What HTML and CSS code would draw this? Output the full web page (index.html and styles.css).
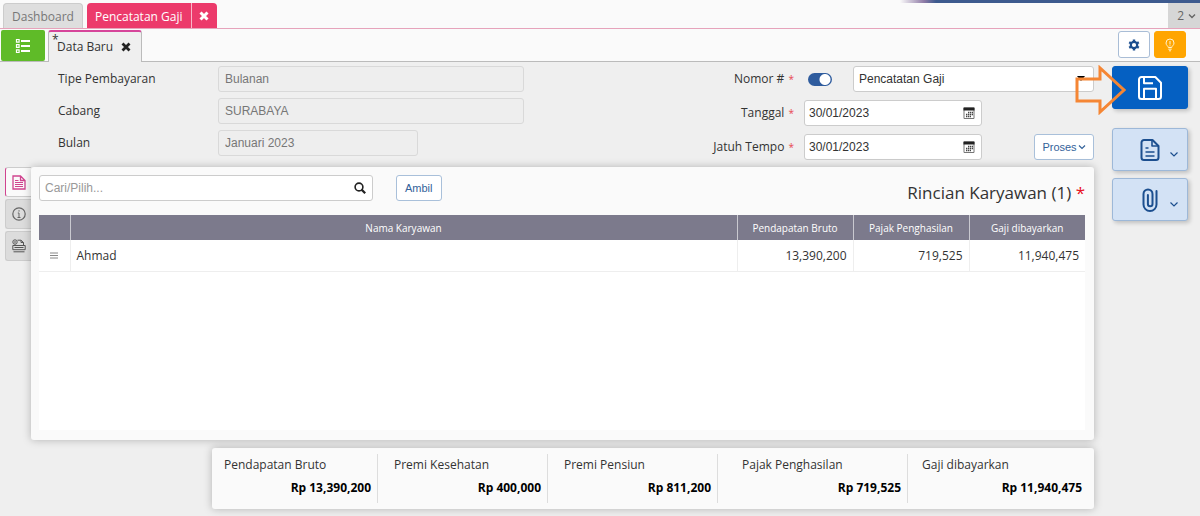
FILE: index.html
```html
<!DOCTYPE html>
<html lang="id">
<head>
  <meta charset="UTF-8">
  <meta name="viewport" content="width=device-width, initial-scale=1">
  <title>Pencatatan Gaji</title>
  <link rel="stylesheet" href="styles.css">
</head>
<body>
  <div class="strip"></div>

  <nav class="tabs">
    <a class="tab" href="#">Dashboard</a>
    <div class="tab-active">
      <a class="tab-name" href="#">Pencatatan Gaji</a>
      <button class="tab-close" type="button" aria-label="Tutup Pencatatan Gaji">
        <svg width="10" height="10" viewBox="0 0 10 10"><path d="M1.5 1.5l7 7M8.5 1.5l-7 7" stroke="currentColor" stroke-width="3"/></svg>
      </button>
    </div>
    <button class="tab-count" type="button">2
      <svg width="8" height="8" viewBox="0 0 8 8"><path d="M1 2.5l3 3 3-3" fill="none" stroke="currentColor" stroke-width="1.4"/></svg>
    </button>
  </nav>

  <div class="subtabs">
    <button class="list-btn" type="button" aria-label="Daftar">
      <svg width="16" height="16" viewBox="0 0 16 16" fill="none" stroke="#fff">
        <path d="M6 3h9M6 8h9M6 13h9" stroke-width="2"/>
        <path d="M1.5 1.5h2.6v2.6H1.5zM1.5 6.7h2.6v2.6H1.5zM1.5 11.9h2.6v2.6H1.5z" stroke-width="1.2"/>
      </svg>
    </button>
    <div class="subtab">
      <span class="dirty">*</span><span>Data Baru</span>
      <button class="sub-close" type="button" aria-label="Tutup Data Baru">
        <svg width="10" height="10" viewBox="0 0 10 10"><path d="M1.5 1.5l7 7M8.5 1.5l-7 7" stroke="currentColor" stroke-width="2.8"/></svg>
      </button>
    </div>
    <div class="tools">
      <button class="tool" type="button" aria-label="Pengaturan">
        <svg width="12" height="12" viewBox="0 0 12 12" fill="none" stroke="#1c4f8f">
          <circle cx="6" cy="6" r="3.2" stroke-width="2.2"/>
          <path d="M6 .4v2M6 9.6v2M1.2 3.2l1.7 1M9.1 7.8l1.7 1M1.2 8.8l1.7-1M9.1 4.2l1.7-1" stroke-width="2.4"/>
        </svg>
      </button>
      <button class="tool tip" type="button" aria-label="Bantuan">
        <svg width="12" height="14" viewBox="0 0 12 14" fill="none" stroke="#fff3d0">
          <path d="M4.3 9.5C4.3 8 2 7.4 2 5a4 4 0 0 1 8 0c0 2.4-2.3 3-2.3 4.5zM4.3 11.2h3.4M5 12.8h2M6 3v3.5M6 7.3v1"/>
        </svg>
      </button>
    </div>
  </div>

  <main class="page">
    <div class="content">
      <form class="form">
        <div class="left-fields">
          <label for="tipe">Tipe Pembayaran</label>
          <input id="tipe" type="text" value="Bulanan" disabled>
          <label for="cabang">Cabang</label>
          <input id="cabang" type="text" value="SURABAYA" disabled>
          <label for="bulan">Bulan</label>
          <input id="bulan" class="short" type="text" value="Januari 2023" disabled>
        </div>
        <div class="right-fields">
          <div class="field">
            <label for="nomor">Nomor # <i>*</i></label>
            <input class="switch" type="checkbox" aria-label="Nomor otomatis" checked>
            <div class="select-box">
              <select id="nomor"><option>Pencatatan Gaji</option></select>
              <svg class="caret" width="8" height="6" viewBox="0 0 8 6"><path d="M0 0h8L4 5z"/></svg>
            </div>
          </div>
          <div class="field">
            <label for="tanggal">Tanggal <i>*</i></label>
            <div class="date">
              <input id="tanggal" type="text" value="30/01/2023">
              <button type="button" aria-label="Pilih tanggal">
                <svg width="12" height="12" viewBox="0 0 12 12"><path d="M1 1h10v10.500H1z" fill="#fff" stroke="#777"/><path d="M.5 .5h11v3H.5z" fill="#222"/><path d="M5 5.500h5M3 7.500h7M3 9.500h5" stroke="#444" stroke-width="1.3" stroke-dasharray="1.4 .6"/></svg>
              </button>
            </div>
          </div>
          <div class="field">
            <label for="tempo">Jatuh Tempo <i>*</i></label>
            <div class="date">
              <input id="tempo" type="text" value="30/01/2023">
              <button type="button" aria-label="Pilih jatuh tempo">
                <svg width="12" height="12" viewBox="0 0 12 12"><path d="M1 1h10v10.500H1z" fill="#fff" stroke="#777"/><path d="M.5 .5h11v3H.5z" fill="#222"/><path d="M5 5.500h5M3 7.500h7M3 9.500h5" stroke="#444" stroke-width="1.3" stroke-dasharray="1.4 .6"/></svg>
              </button>
            </div>
            <button class="btn proses" type="button">Proses<svg width="8" height="8" viewBox="0 0 8 8"><path d="M1 2.500l3 3 3-3" fill="none" stroke="currentColor" stroke-width="1.2"/></svg></button>
          </div>
        </div>
      </form>

      <div class="detail">
        <div class="side-tabs">
          <button class="side-tab active" type="button" aria-label="Rincian">
            <svg width="14" height="15" viewBox="0 0 14 15" fill="none" stroke="#d0448f"><path d="M1 1h7.500L13 5.500V14H1zM8.500 1v4.500H13" stroke-width="1.3"/><path d="M3 5.500h3.500M3 7.500h8M3 9.500h8M3 11.500h8"/></svg>
          </button>
          <button class="side-tab" type="button" aria-label="Info">
            <svg width="14" height="14" viewBox="0 0 14 14" fill="none" stroke="#666"><circle cx="7" cy="7" r="6.2" stroke-width="1.2"/><path d="M7 3.2v1.400M5.800 6H7v4.500M5.500 10.500h3"/></svg>
          </button>
          <button class="side-tab" type="button" aria-label="Lampiran">
            <svg width="14" height="14" viewBox="0 0 14 14" fill="none" stroke="#555"><circle cx="3" cy="3" r="2.2"/><path d="M3 2v2M5.500 1.200H9l2.500 2.300v3M9 1.200v2.300h2.500M3 6.500V5.500"/><path d="M.8 6.500h12.400v4.200H.8zM2.500 8.500h9M1.500 12.800h11"/></svg>
          </button>
        </div>
        <section class="card">
          <div class="card-head">
            <div class="search">
              <input type="text" placeholder="Cari/Pilih..." aria-label="Cari/Pilih">
              <button type="button" aria-label="Cari">
                <svg width="12" height="12" viewBox="0 0 12 12" fill="none" stroke="#222"><circle cx="5" cy="5" r="3.9" stroke-width="1.6"/><path d="M7.600 7.600l3.600 3.600" stroke-width="2.2"/></svg>
              </button>
            </div>
            <button class="btn" type="button">Ambil</button>
            <h2>Rincian Karyawan (1) <i>*</i></h2>
          </div>
          <div class="table-box">
            <table>
              <colgroup><col class="c-handle"><col><col class="c-num"><col class="c-num"><col class="c-num"></colgroup>
              <thead>
                <tr><th></th><th>Nama Karyawan</th><th>Pendapatan Bruto</th><th>Pajak Penghasilan</th><th>Gaji dibayarkan</th></tr>
              </thead>
              <tbody>
                <tr>
                  <td class="handle"><svg width="8" height="7" viewBox="0 0 8 7"><path d="M0 1h8M0 3.500h8M0 6h8" stroke="#888"/></svg></td>
                  <td>Ahmad</td><td class="num">13,390,200</td><td class="num">719,525</td><td class="num">11,940,475</td>
                </tr>
              </tbody>
            </table>
          </div>
        </section>
      </div>

      <dl class="summary">
        <div><dt>Pendapatan Bruto</dt><dd>Rp 13,390,200</dd></div>
        <div><dt>Premi Kesehatan</dt><dd>Rp 400,000</dd></div>
        <div><dt>Premi Pensiun</dt><dd>Rp 811,200</dd></div>
        <div class="wide"><dt>Pajak Penghasilan</dt><dd>Rp 719,525</dd></div>
        <div class="wide last"><dt>Gaji dibayarkan</dt><dd>Rp 11,940,475</dd></div>
      </dl>
    </div>

    <aside class="actions">
      <div class="save-box">
        <button class="action save" type="button" aria-label="Simpan">
          <svg width="24" height="24" viewBox="0 0 24 24" fill="none" stroke="#fff" stroke-width="2" stroke-linejoin="round"><path d="M3.500 1h13.800L23 6.700v13.800a2.500 2.500 0 0 1-2.500 2.500h-17A2.500 2.500 0 0 1 1 20.500v-17A2.500 2.500 0 0 1 3.500 1z"/><path d="M6 1.500v5.700h9M6 22.500v-9.700h12v9.700"/></svg>
        </button>
        <svg class="pointer" width="52" height="50" viewBox="0 0 52 50"><path d="M3 14h23V3l24 22-24 22V36H3z" fill="none" stroke="#f58634" stroke-width="3"/></svg>
      </div>
      <button class="action" type="button" aria-label="Dokumen">
        <svg width="20" height="24" viewBox="0 0 20 24" fill="none" stroke="#1c4f8f" stroke-width="2" stroke-linejoin="round"><path d="M4 2h8.500L18.500 8v11.500A2.500 2.500 0 0 1 16 22H4a2.500 2.500 0 0 1-2.500-2.500v-15A2.500 2.500 0 0 1 4 2z"/><path d="M12 2.500V8h6M5.500 10h3M5.500 14h9M5.500 18h9" stroke-width="1.6"/></svg>
        <svg class="more" width="8" height="8" viewBox="0 0 8 8"><path d="M.5 2.500L4 6l3.500-3.500" fill="none" stroke="#1c4f8f" stroke-width="1.2"/></svg>
      </button>
      <button class="action" type="button" aria-label="Lampiran">
        <svg width="16" height="24" viewBox="0 0 16 24" fill="none" stroke="#1c4f8f" stroke-width="2" stroke-linecap="round"><path d="M14.500 3v13.500a6.500 6.500 0 0 1-13 0V6a4.500 4.500 0 0 1 9 0v10a2.300 2.300 0 0 1-4.600 0V7"/></svg>
        <svg class="more" width="8" height="8" viewBox="0 0 8 8"><path d="M.5 2.500L4 6l3.500-3.500" fill="none" stroke="#1c4f8f" stroke-width="1.2"/></svg>
      </button>
    </aside>
  </main>
</body>
</html>
```

FILE: styles.css
```css
* { box-sizing: border-box; }
body {
  margin: 0;
  min-height: 100vh;
  background: #efefef;
  color: #333;
  font: 12px/16px "Open Sans", "Noto Sans", sans-serif;
}
a { color: inherit; text-decoration: none; }
i { color: #e8474f; font-style: normal; }
button, input, select { font-family: "Liberation Sans", Arial, sans-serif; }
button { padding: 0; border: 0; background: none; color: inherit; cursor: pointer; }
svg { display: block; flex: none; }

.strip {
  height: 3px;
  background: linear-gradient(90deg, #fafafa 75%, #8f7ba6 77%, #3d5a8e 78%);
}

/* window tabs */
.tabs {
  display: flex;
  height: 26px;
  padding-left: 3px;
  gap: 4px;
  background: #fafafa;
  border-bottom: 1px solid #e6a3bb;
}
.tab {
  padding: 5px 8px;
  background: #dedede;
  border: 1px solid #ccc;
  border-bottom: 0;
  border-radius: 4px 4px 0 0;
  color: #777;
}
.tab-active {
  display: flex;
  background: #ec3a6b;
  border-radius: 4px 4px 0 0;
  color: #fff;
}
.tab-name { padding: 6px 8px; border-right: 1px solid #f9b5c8; }
.tab-close { display: grid; place-items: center; width: 25px; }
.tab-count {
  display: flex;
  align-items: center;
  justify-content: flex-end;
  gap: 4px;
  width: 32px;
  margin-left: auto;
  padding-right: 4px;
  background: #d6d6d6;
  color: #666;
  font: 12px "Open Sans", sans-serif;
}

.subtabs {
  display: flex;
  height: 33px;
  padding: 1px 14px 0 1px;
  background: #fafafa;
  border-bottom: 1px solid #bbb;
}
.list-btn {
  display: grid;
  place-items: center;
  width: 44px;
  margin-right: 3px;
  background: #5fbb28;
  border-radius: 2px;
}
.subtab {
  display: flex;
  align-items: center;
  height: 32px;
  padding: 0 10px 0 3px;
  background: #efefef;
  border: 1px solid #bbb;
  border-top: 2px solid #d6459a;
  border-bottom: 0;
  border-radius: 3px 3px 0 0;
}
.dirty { align-self: flex-start; width: 5px; }
.sub-close { margin-left: 8px; color: #222; }
.tools { display: flex; gap: 4px; margin: 1px 0 0 auto; }
.tool {
  display: grid;
  place-items: center;
  width: 32px;
  height: 27px;
  background: #fff;
  border: 1px solid #a9bdd6;
  border-radius: 3px;
}
.tip { background: #ffa500; border-color: #ffa500; }

.page { display: flex; gap: 18px; padding: 4px 12px 0 5px; }
.content { flex: 1; min-width: 0; }

/* header form */
.form { display: flex; justify-content: space-between; }
.left-fields {
  display: grid;
  grid-template-columns: 160px 306px;
  align-content: start;
  align-items: center;
  gap: 6px 0;
  padding-left: 53px;
}
.left-fields input, .date, .search, select {
  height: 26px;
  border: 1px solid #ccc;
  border-radius: 3px;
  background: #fff;
}
.left-fields input {
  width: 100%;
  padding: 0 6px;
  background: #eee;
  border-color: #d9d9d9;
  color: #777;
  font-size: 12px;
}
.left-fields .short { width: 200px; }
.right-fields { display: grid; gap: 8px; width: 390px; }
.field { display: flex; align-items: center; }
.field label { width: 90px; text-align: right; }
.field i { margin-left: 1px; font-size: 10px; }
.switch {
  appearance: none;
  width: 24px;
  height: 13px;
  margin: 0 21px 0 14px;
  border-radius: 7px;
  background: radial-gradient(circle at 17px 50%, #fff 5px, #2f5c9e 6px);
}
.select-box { position: relative; flex: 1; }
select {
  appearance: none;
  width: 100%;
  padding: 0 5px;
  color: #333;
  font-family: "Liberation Sans Narrow", "Arial Narrow", "Liberation Sans", sans-serif;
  font-size: 12px;
}
.caret { position: absolute; right: 9px; top: 10px; }
.date, .search { display: flex; align-items: center; }
.date { width: 178px; margin-left: 10px; }
.date input, .search input {
  flex: 1;
  min-width: 0;
  padding: 0 4px;
  border: 0;
  background: none;
  color: #333;
  font-size: 12px;
}
.date button { margin-right: 6px; }
.btn {
  height: 26px;
  padding: 0 8px;
  background: #fff;
  border: 1px solid #a9c0da;
  border-radius: 3px;
  color: #33629a;
  font-size: 11px;
}
.proses { display: flex; align-items: center; justify-content: center; gap: 1px; width: 60px; margin-left: auto; }

/* employee detail */
.detail { display: flex; margin-top: 7px; }
.side-tabs { display: grid; align-content: start; gap: 2px; width: 26px; }
.side-tab {
  display: grid;
  place-items: center;
  height: 30px;
  background: #dcdcdc;
  border: 1px solid #ccc;
  border-right: 0;
  border-radius: 3px 0 0 3px;
}
.side-tab.active { background: #fafafa; border-left: 1px solid #d0448f; }
.card {
  flex: 1;
  height: 273px;
  padding: 8px 9px 10px 8px;
  background: #fafafa;
  border-radius: 3px;
  box-shadow: 0 0 8px rgba(0, 0, 0, .25);
}
.card-head { display: flex; height: 40px; align-items: flex-start; }
.search { width: 334px; margin-right: 23px; }
.search input { padding: 0 5px; }
.search input::placeholder { color: #999; }
.search button { margin-right: 6px; }
h2 {
  margin: 6px 0 0 auto;
  font-size: 17px;
  font-weight: 400;
  line-height: 24px;
}
h2 i { color: #e81123; }
.table-box { height: 215px; background: #fff; }
table { width: 100%; border-collapse: collapse; table-layout: fixed; }
.c-handle { width: 31px; }
.c-num { width: 116px; }
th {
  height: 25px;
  padding: 1px 0 0;
  background: #7c7a8c;
  color: #fff;
  font-size: 10px;
  font-weight: 400;
}
th + th { border-left: 1px solid #c9c9d0; }
td { height: 31px; padding: 1px 6px 0; border-bottom: 1px solid #eee; }
td + td { border-left: 1px solid #eee; }
.num { text-align: right; }
.handle svg { margin: 0 auto; }

/* totals */
.summary {
  display: grid;
  grid-template-columns: 166fr 170fr 170fr 190fr 186fr;
  margin: 8px 0 0 207px;
  padding: 6px 0;
  background: #fafafa;
  border-radius: 3px;
  box-shadow: 0 0 8px rgba(0, 0, 0, .25);
}
.summary div { height: 49px; padding: 3px 6px 0 16px; border-right: 1px solid #ddd; }
.summary div:first-child { padding-left: 12px; }
.summary .wide { padding-left: 24px; }
.summary .last { padding: 3px 12px 0 14px; border: 0; }
dd { margin: 7px 0 0; color: #000; font-weight: 700; text-align: right; }

/* action buttons */
.actions { display: grid; align-content: start; gap: 7px; width: 76px; }
.action {
  display: grid;
  place-items: center;
  position: relative;
  width: 100%;
  height: 43px;
  background: #d3e2f5;
  border: 1px solid #9db8d8;
  border-radius: 3px;
  box-shadow: 2px 2px 4px rgba(0, 0, 0, .2);
}
.save { background: #0560c2; border-color: #0560c2; }
.save-box { position: relative; margin-bottom: 12px; }
.more { position: absolute; right: 9px; bottom: 12px; }
.pointer { position: absolute; left: -38px; top: -1px; }
```
